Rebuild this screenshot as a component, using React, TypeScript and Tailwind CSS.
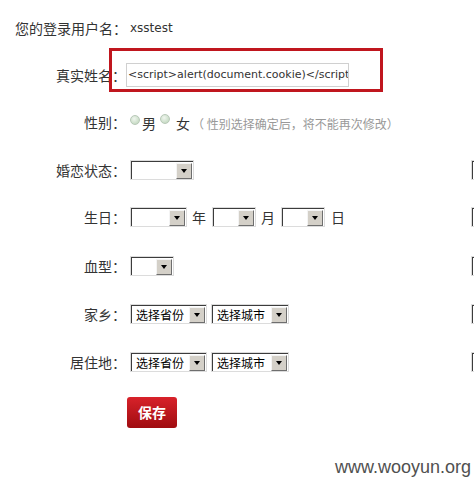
import React from 'react'

const CJK = "font-['Noto_Sans_CJK_SC','Noto_Sans',sans-serif]"

// classic windows-style dropdown
const Select: React.FC<{ w: string; text?: string; className?: string }> = ({ w, text, className }) => (
    <div className={`flex h-[20px] shrink-0 border border-[#dcdcdc] bg-white ${w} ${className ?? ''}`}>
        <div className="flex flex-1 items-center border-t border-l border-[#3c3c3c] pr-[1px]">
            <span className={`flex-1 whitespace-nowrap pl-[4px] text-[12px] leading-none text-black ${CJK}`}>{text}</span>
            <div className="flex h-[16px] w-[16px] items-center justify-center border-t border-l border-[#f4f4f4] border-r border-b border-r-[#6e6e6e] border-b-[#6e6e6e] bg-[#d4d0c8]">
                <div className="h-0 w-0 border-x-[3.5px] border-t-[4px] border-x-transparent border-t-black" />
            </div>
        </div>
    </div>
)

const Label: React.FC<{ children: React.ReactNode }> = ({ children }) => (
    <div className={`w-[130px] shrink-0 pr-[4px] text-right text-[14px] leading-none text-[#333] ${CJK}`}>{children}</div>
)

const Radio = () => (
    <span className="mb-[5px] inline-block h-[10px] w-[10px] rounded-full border border-[#b8c8b8] bg-[radial-gradient(circle_at_40%_35%,#f0f6ef,#b9d2b6)]" />
)

// partial select peeking from the next column
const Edge = () => <Select w="w-[60px]" className="ml-auto -mr-[57px]" />

export default function App() {
    return (
        <div className="relative h-[477px] w-[474px] overflow-hidden bg-white">
            <div className="flex flex-col">
                <div className="mt-[18px] flex h-[20px] items-center pl-[15px]">
                    <span className={`text-[14px] leading-none text-[#333] ${CJK}`}>您的登录用户名：</span>
                    <span className="ml-[3px] font-['DejaVu_Sans',sans-serif] text-[12px] text-[#333]">xsstest</span>
                </div>

                <div className="mt-[25px] flex h-[24px] items-center">
                    <Label>真实姓名：</Label>
                    <div className="-ml-[4px] flex h-[24px] w-[223px] items-center overflow-hidden whitespace-nowrap border border-[#d0d0d0] pl-[1px] font-['DejaVu_Sans',sans-serif] text-[11px] text-[#333]">
                        &lt;script&gt;alert(document.cookie)&lt;/script
                    </div>
                </div>

                <div className="mt-[25px] flex h-[20px] items-center">
                    <Label>性别：</Label>
                    <div className={`flex items-end text-[14px] leading-none text-[#333] ${CJK}`}>
                        <Radio />
                        <span className="ml-[2px]">男</span>
                        <span className="ml-[4px]"><Radio /></span>
                        <span className="ml-[6px]">女</span>
                        <span className="ml-[2px] text-[12px] text-[#999]">（ 性别选择确定后，将不能再次修改）</span>
                    </div>
                </div>

                <div className="mt-[28px] flex h-[20px] items-center">
                    <Label>婚恋状态：</Label>
                    <Select w="w-[64px]" />
                    <Edge />
                </div>

                <div className="mt-[27px] flex h-[20px] items-center">
                    <Label>生日：</Label>
                    <Select w="w-[57px]" />
                    <span className={`ml-[5px] text-[14px] text-[#333] ${CJK}`}>年</span>
                    <Select w="w-[44px]" className="ml-[6px]" />
                    <span className={`ml-[5px] text-[14px] text-[#333] ${CJK}`}>月</span>
                    <Select w="w-[44px]" className="ml-[6px]" />
                    <span className={`ml-[6px] text-[14px] text-[#333] ${CJK}`}>日</span>
                    <Edge />
                </div>

                <div className="mt-[29px] flex h-[20px] items-center">
                    <Label>血型：</Label>
                    <Select w="w-[44px]" />
                    <Edge />
                </div>

                <div className="mt-[28px] flex h-[20px] items-center">
                    <Label>家乡：</Label>
                    <Select w="w-[77px]" text="选择省份" />
                    <Select w="w-[78px]" text="选择城市" className="ml-[4px]" />
                    <Edge />
                </div>

                <div className="mt-[28px] flex h-[20px] items-center">
                    <Label>居住地：</Label>
                    <Select w="w-[77px]" text="选择省份" />
                    <Select w="w-[78px]" text="选择城市" className="ml-[4px]" />
                    <Edge />
                </div>

                <div className="mt-[25px] pl-[127px]">
                    <button className={`flex h-[31px] w-[50px] items-center justify-center rounded-[3px] bg-gradient-to-b from-[#d8222a] to-[#a00c10] text-[14px] font-bold text-white ${CJK}`}>
                        保存
                    </button>
                </div>

                <div className="mt-[30px] pr-[3px] text-right font-['Liberation_Sans',sans-serif] text-[18px] leading-none text-[#505050]">
                    www.wooyun.org
                </div>
            </div>

            {/* red highlight box drawn over the name field */}
            <div className="absolute left-[109px] top-[48px] h-[44px] w-[274px] border-[3px] border-[#c0161e]" />
        </div>
    )
}
